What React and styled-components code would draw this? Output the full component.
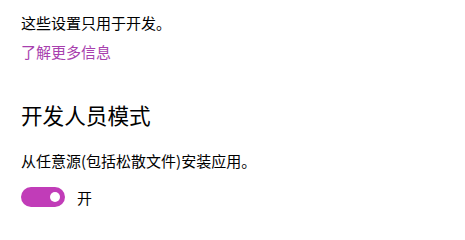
import React, { useState } from "react";
import styled, { createGlobalStyle } from "styled-components";

const Global = createGlobalStyle`
  html, body { margin: 0; padding: 0; background: #ffffff; }
  body { font-family: "Noto Sans CJK SC", "Noto Sans", sans-serif; color: #000000; }
`;

const Page = styled.div`
  display: flex;
  flex-direction: column;
  align-items: flex-start;
  padding: 13px 21px 0 21px;
`;

const Text = styled.p`
  margin: 0;
  font-size: 15px;
  line-height: 20px;
  color: #000000;
`;

const Link = styled.a`
  margin-top: ${(p) => p.$mt || 0}px;
  font-size: 15px;
  line-height: 20px;
  color: #a83fae;
  text-decoration: none;
  cursor: pointer;
`;

const Heading = styled.h2`
  margin: 39px 0 0 0;
  font-size: 21.6px;
  font-weight: 400;
  line-height: 28px;
`;

const Desc = styled(Text)`
  margin-top: 22px;
`;

const ToggleRow = styled.label`
  display: flex;
  align-items: center;
  gap: 12px;
  margin-top: 14px;
  cursor: pointer;
`;

const Track = styled.span`
  display: flex;
  align-items: center;
  justify-content: ${(p) => (p.$on ? "flex-end" : "flex-start")};
  box-sizing: border-box;
  width: 44px;
  height: 20px;
  padding: 0 5px;
  border-radius: 10px;
  background: ${(p) => (p.$on ? "#c13cb8" : "#ffffff")};
  border: ${(p) => (p.$on ? "none" : "2px solid #000")};
`;

const Knob = styled.span`
  width: 10px;
  height: 10px;
  border-radius: 50%;
  background: ${(p) => (p.$on ? "#ffffff" : "#000000")};
`;

const State = styled.span`
  font-size: 15px;
  line-height: 20px;
  margin-top: 3px;
`;

export default function App() {
  const [on, setOn] = useState(true);
  return (
    <>
      <Global />
      <Page>
        <Text>这些设置只用于开发。</Text>
        <Link $mt={9}>了解更多信息</Link>
        <Heading>开发人员模式</Heading>
        <Desc>从任意源(包括松散文件)安装应用。</Desc>
        <ToggleRow onClick={() => setOn(!on)}>
          <Track $on={on}>
            <Knob $on={on} />
          </Track>
          <State>{on ? "开" : "关"}</State>
        </ToggleRow>
      </Page>
    </>
  );
}
